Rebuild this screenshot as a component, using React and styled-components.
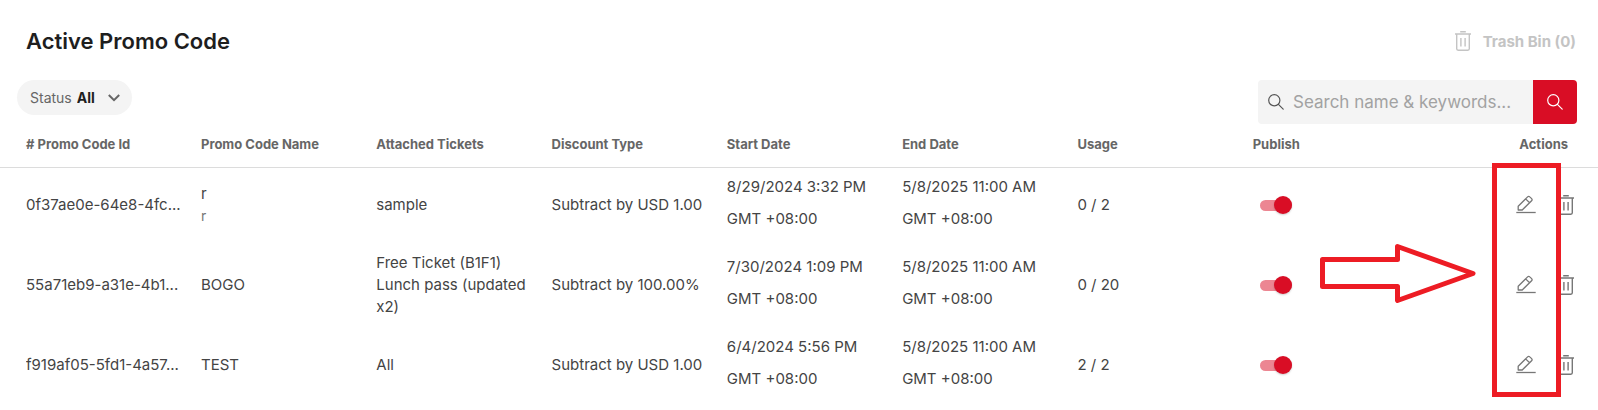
import React, { useState } from 'react';
import styled, { createGlobalStyle } from 'styled-components';

const promoCodes = [
    {
        id: '0f37ae0e-64e8-4fc...',
        name: 'r',
        description: 'r',
        tickets: ['sample'],
        discount: 'Subtract by USD 1.00',
        start: '8/29/2024 3:32 PM',
        end: '5/8/2025 11:00 AM',
        usage: '0 / 2',
    },
    {
        id: '55a71eb9-a31e-4b1...',
        name: 'BOGO',
        tickets: ['Free Ticket (B1F1)', 'Lunch pass (updated x2)'],
        discount: 'Subtract by 100.00%',
        start: '7/30/2024 1:09 PM',
        end: '5/8/2025 11:00 AM',
        usage: '0 / 20',
    },
    {
        id: 'f919af05-5fd1-4a57...',
        name: 'TEST',
        tickets: ['All'],
        discount: 'Subtract by USD 1.00',
        start: '6/4/2024 5:56 PM',
        end: '5/8/2025 11:00 AM',
        usage: '2 / 2',
    },
];

function TrashIcon () {
    return (
        <svg width="16" height="20" viewBox="0 0 16 20" fill="none" stroke="currentColor" strokeWidth="1.4" aria-hidden="true">
            <path d="M5.2 0.8H10.8M0 3H16M1.7 3V17.8Q1.7 19.2 3.1 19.2H12.9Q14.3 19.2 14.3 17.8V3M5.9 7V15.4M10.1 7V15.4" />
        </svg>
    )
}

function EditIcon () {
    return (
        <svg width="20" height="20" viewBox="0 0 20 20" fill="none" stroke="currentColor" strokeWidth="1.3" strokeLinejoin="round" aria-hidden="true">
            <path d="M2.2 15V11.3L11.6 1.9Q12.7 0.8 13.8 1.9L15.6 3.6Q16.6 4.7 15.6 5.7L6.2 15ZM9.6 3.9L13.6 7.8" />
            <path d="M0.3 17.5H19.7" />
        </svg>
    )
}

function SearchIcon () {
    return (
        <svg width="16" height="16" viewBox="0 0 16 16" fill="none" stroke="currentColor" strokeWidth="1.2" strokeLinecap="round" aria-hidden="true">
            <circle cx="6.3" cy="6.3" r="5.6" />
            <path d="M10.4 10.4L15.2 15.2" />
        </svg>
    )
}

function ChevronIcon () {
    return (
        <svg width="12" height="8" viewBox="0 0 12 8" fill="none" stroke="currentColor" strokeWidth="2" aria-hidden="true">
            <path d="M0.8 1L6 6.2L11.2 1" />
        </svg>
    )
}

function PromoRow ({ promo }) {
    const [published, setPublished] = useState(true);

    return (
        <tr>
            <Cell><Ellipsis>{promo.id}</Ellipsis></Cell>
            <Cell>
                {promo.name}
                {promo.description && <Description>{promo.description}</Description>}
            </Cell>
            <Cell>
                {promo.tickets.map((ticket) => <div key={ticket}>{ticket}</div>)}
            </Cell>
            <Cell>{promo.discount}</Cell>
            <DateCell>{promo.start}<br />GMT +08:00</DateCell>
            <DateCell>{promo.end}<br />GMT +08:00</DateCell>
            <Cell>{promo.usage}</Cell>
            <Cell>
                <Switch
                    type="checkbox"
                    role="switch"
                    aria-label={`Publish ${promo.name}`}
                    checked={published}
                    onChange={(e) => setPublished(e.target.checked)}
                />
            </Cell>
            <Cell>
                <Actions>
                    <IconButton type="button" aria-label={`Edit ${promo.name}`}><EditIcon /></IconButton>
                    <IconButton type="button" aria-label={`Delete ${promo.name}`}><TrashIcon /></IconButton>
                </Actions>
            </Cell>
        </tr>
    )
}

function App () {
    return (
        <>
        <GlobalStyle />
        <Page>
            <Header>
                <Title>Active Promo Code</Title>
                <TrashButton type="button">
                    <TrashIcon />
                    Trash Bin (0)
                </TrashButton>
            </Header>
            <Toolbar>
                <Filter>
                    Status
                    <FilterSelect defaultValue="All">
                        <option>All</option>
                    </FilterSelect>
                    <ChevronIcon />
                </Filter>
                <SearchForm onSubmit={(e) => e.preventDefault()}>
                    <SearchField>
                        <SearchIcon />
                        <SearchInput type="text" aria-label="Search" placeholder="Search name & keywords..." />
                    </SearchField>
                    <SearchButton type="submit" aria-label="Search"><SearchIcon /></SearchButton>
                </SearchForm>
            </Toolbar>
            <TableArea>
                <Table>
                    <thead>
                        <tr>
                            <HeadCell># Promo Code Id</HeadCell>
                            <HeadCell>Promo Code Name</HeadCell>
                            <HeadCell>Attached Tickets</HeadCell>
                            <HeadCell>Discount Type</HeadCell>
                            <HeadCell>Start Date</HeadCell>
                            <HeadCell>End Date</HeadCell>
                            <HeadCell>Usage</HeadCell>
                            <HeadCell>Publish</HeadCell>
                            <HeadCell $align="right">Actions</HeadCell>
                        </tr>
                    </thead>
                    <tbody>
                        {promoCodes.map((promo) => <PromoRow key={promo.id} promo={promo} />)}
                    </tbody>
                </Table>
                <Highlight />
                <Arrow width="156" height="60" viewBox="0 0 156 60" aria-hidden="true">
                    <path d="M2.5 16.5H77.5V3.5L153 30.5L77.5 57.5V43.5H2.5Z" />
                </Arrow>
            </TableArea>
        </Page>
        </>
    )
}

const GlobalStyle = createGlobalStyle`
  * {
    box-sizing: border-box;
  }
  body {
    margin: 0;
    background: #fff;
  }
  body, button, input, select {
    font-family: Inter, "Open Sans", sans-serif;
  }
`
const Page = styled.main`
  color: #444;
`
const Header = styled.header`
  display: flex;
  align-items: center;
  justify-content: space-between;
  padding: 25px 22px 23px 26px;
`
const Title = styled.h1`
  margin: 0;
  color: #1e1e1e;
  font-size: 22px;
  font-weight: 600;
  line-height: 32px;
`
const TrashButton = styled.button`
  display: flex;
  align-items: center;
  gap: 12px;
  padding: 0;
  border: 0;
  background: none;
  color: #c4c4c4;
  font-size: 15px;
  font-weight: 700;
`
const Toolbar = styled.div`
  display: flex;
  align-items: flex-start;
  justify-content: space-between;
  padding: 0 21px 0 17px;
`
const Filter = styled.label`
  display: flex;
  align-items: center;
  height: 35px;
  padding: 0 12px 0 13px;
  border-radius: 18px;
  background: #f4f4f4;
  color: #666;
  font-size: 14px;
`
const FilterSelect = styled.select`
  appearance: none;
  margin: 0 12px 0 5px;
  padding: 0;
  border: 0;
  background: none;
  color: #1e1e1e;
  font-size: 14px;
  font-weight: 700;
`
const SearchForm = styled.form`
  display: flex;
  flex: 0 1 319px;
  height: 44px;
  overflow: hidden;
  border-radius: 4px;
`
const SearchField = styled.div`
  display: flex;
  flex: 1;
  align-items: center;
  gap: 9px;
  min-width: 0;
  padding-left: 10px;
  background: #f4f4f4;
  color: #555;
`
const SearchInput = styled.input`
  flex: 1;
  min-width: 0;
  padding: 0;
  border: 0;
  outline: none;
  background: none;
  color: #444;
  font-size: 17px;
  font-weight: 400;

  &::placeholder {
    color: #a2a2a2;
    opacity: 1;
  }
`
const SearchButton = styled.button`
  display: flex;
  align-items: center;
  justify-content: center;
  width: 44px;
  padding: 0;
  border: 0;
  background: #d90d25;
  color: #fff;
`
const TableArea = styled.div`
  position: relative;
`
const Table = styled.table`
  width: 100%;
  table-layout: fixed;
  border-collapse: collapse;
`
const HeadCell = styled.th`
  height: 43px;
  padding: 0 0 2px 16px;
  border-bottom: 1px solid #dcdcdc;
  color: #666;
  font-size: 13px;
  font-weight: 700;
  text-align: ${(props) => props.$align || 'left'};
  white-space: nowrap;

  &:first-child {
    width: 185px;
    padding-left: 26px;
  }
  &:last-child {
    width: 186px;
    padding-right: 30px;
  }
`
const Cell = styled.td`
  height: 80px;
  padding: 0 0 4px 16px;
  font-size: 15px;
  font-weight: 400;
  line-height: 22px;

  &:first-child {
    padding-left: 26px;
  }
`
const DateCell = styled(Cell)`
  padding-bottom: 8px;
  line-height: 32px;
  white-space: nowrap;
`
const Ellipsis = styled.div`
  overflow: hidden;
  text-overflow: ellipsis;
  white-space: nowrap;
`
const Description = styled.div`
  color: #777;
  font-size: 14px;
`
const Switch = styled.input`
  appearance: none;
  display: flex;
  align-items: center;
  width: 32px;
  height: 11px;
  margin: 0 0 0 7px;
  border-radius: 6px;
  background: #ccc;

  &::before {
    content: '';
    width: 18px;
    height: 18px;
    flex: none;
    border-radius: 50%;
    background: #fff;
    box-shadow: 0 1px 2px rgba(0, 0, 0, 0.2);
  }
  &:checked {
    justify-content: flex-end;
    background: #ec8692;
  }
  &:checked::before {
    background: #d90d25;
  }
`
const Actions = styled.div`
  display: flex;
  align-items: center;
  justify-content: flex-end;
  gap: 22px;
  padding-right: 24px;
`
const IconButton = styled.button`
  display: flex;
  padding: 0;
  border: 0;
  background: none;
  color: #777;
`
/* markers drawn over the edit buttons */
const Highlight = styled.div`
  position: absolute;
  top: 39px;
  right: 37px;
  width: 69px;
  height: 234px;
  border: 5px solid #ed1c24;
  pointer-events: none;
`
const Arrow = styled.svg`
  position: absolute;
  top: 119px;
  right: 122px;
  fill: none;
  stroke: #ed1c24;
  stroke-width: 5;
  stroke-linejoin: round;
  pointer-events: none;
`

export default App;
